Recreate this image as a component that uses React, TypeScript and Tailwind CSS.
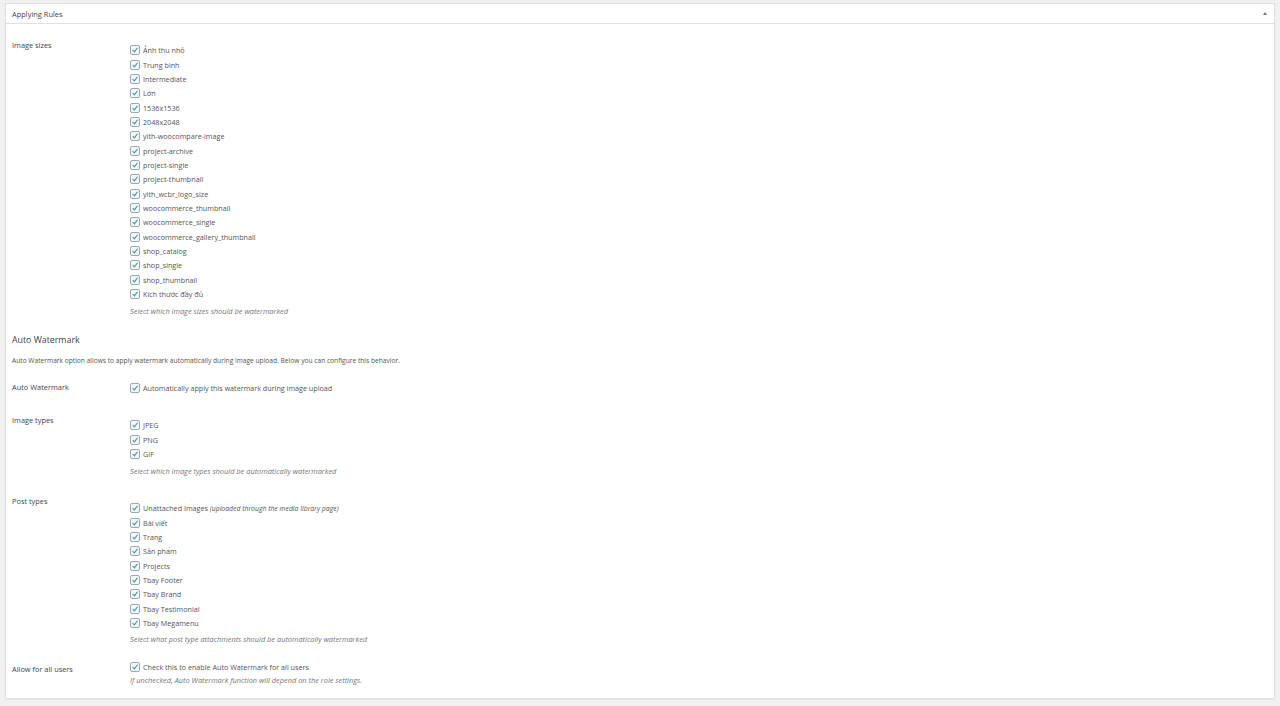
const sizes = [
  "Ảnh thu nhỏ",
  "Trung bình",
  "Intermediate",
  "Lớn",
  "1536x1536",
  "2048x2048",
  "yith-woocompare-image",
  "project-archive",
  "project-single",
  "project-thumbnail",
  "yith_wcbr_logo_size",
  "woocommerce_thumbnail",
  "woocommerce_single",
  "woocommerce_gallery_thumbnail",
  "shop_catalog",
  "shop_single",
  "shop_thumbnail",
  "Kích thước đầy đủ",
];

const imageTypes = ["JPEG", "PNG", "GIF"];

const postTypes = [
  "Bài viết",
  "Trang",
  "Sản phẩm",
  "Projects",
  "Tbay Footer",
  "Tbay Brand",
  "Tbay Testimonial",
  "Tbay Megamenu",
];

function Check({ children }: { children: React.ReactNode }) {
  return (
    <div className="flex h-[14.35px] items-center">
      <span className="flex h-[10px] w-[10px] items-center justify-center rounded-[2px] border border-[#9aaab3] bg-[#f3f7f8]">
        <svg viewBox="0 0 10 10" className="h-[10px] w-[10px]">
          <path d="M2 5l2.2 2.4L8.2 2.2" fill="none" stroke="#3f8fa8" strokeWidth="1.3" />
        </svg>
      </span>
      <span className="ml-[3px] whitespace-nowrap">{children}</span>
    </div>
  );
}

function Note({ children }: { children: React.ReactNode }) {
  return <p className="text-[7.4px] italic text-[#777]">{children}</p>;
}

function Row({ label, className, children }: { label: string; className: string; children: React.ReactNode }) {
  return (
    <div className={`flex ${className}`}>
      <div className="w-[118px] shrink-0 text-[7.4px] font-medium text-[#444]">{label}</div>
      <div>{children}</div>
    </div>
  );
}

export default function App() {
  return (
    <div className="h-[706px] overflow-hidden bg-[#f1f1f1] pl-[5px] pr-[5px] pt-[3px] font-['Open_Sans',sans-serif] text-[7.2px] leading-[12px] text-[#555]">
      <div className="h-[696px] border border-[#e0e0e0] bg-white shadow-[0_1px_1px_rgba(0,0,0,0.04)]">
        <div className="flex h-[20px] items-center justify-between border-b border-[#e0e0e0] pl-[6px] pr-[7px] text-[7.45px] font-medium text-[#444]">
          <span>Applying Rules</span>
          <span className="h-0 w-0 border-x-[2px] border-b-[3px] border-x-transparent border-b-[#72777c]" />
        </div>
        <div className="pl-[6px]">
          <Row label="Image sizes" className="pt-[15px]">
            <div className="pt-[4px]">
              {sizes.map((s) => (
                <Check key={s}>{s}</Check>
              ))}
              <div className="mt-[4px]">
                <Note>Select which image sizes should be watermarked</Note>
              </div>
            </div>
          </Row>
          <h3 className="mt-[16px] text-[8.8px] font-medium leading-[14px] text-[#444]">Auto Watermark</h3>
          <p className="mt-[8px] text-[6.65px]">
            Auto Watermark option allows to apply watermark automatically during image upload. Below you can configure this behavior.
          </p>
          <Row label="Auto Watermark" className="mt-[14px]">
            <Check>Automatically apply this watermark during image upload</Check>
          </Row>
          <Row label="Image types" className="mt-[18px]">
            <div className="pt-[4.6px]">
              {imageTypes.map((s) => (
                <Check key={s}>{s}</Check>
              ))}
              <div className="mt-[3.4px]">
                <Note>Select which image types should be automatically watermarked</Note>
              </div>
            </div>
          </Row>
          <Row label="Post types" className="mt-[18px]">
            <div className="pt-[6.5px]">
              <Check>
                Unattached Images <em className="text-[6.85px]">(uploaded through the media library page)</em>
              </Check>
              {postTypes.map((s) => (
                <Check key={s}>{s}</Check>
              ))}
              <div className="mt-[2.5px]">
                <Note>Select what post type attachments should be automatically watermarked</Note>
              </div>
            </div>
          </Row>
          <Row label="Allow for all users" className="mt-[18px]">
            <div className="-mt-[3px]">
              <Check>Check this to enable Auto Watermark for all users</Check>
              <Note>If unchecked, Auto Watermark function will depend on the role settings.</Note>
            </div>
          </Row>
        </div>
      </div>
    </div>
  );
}
